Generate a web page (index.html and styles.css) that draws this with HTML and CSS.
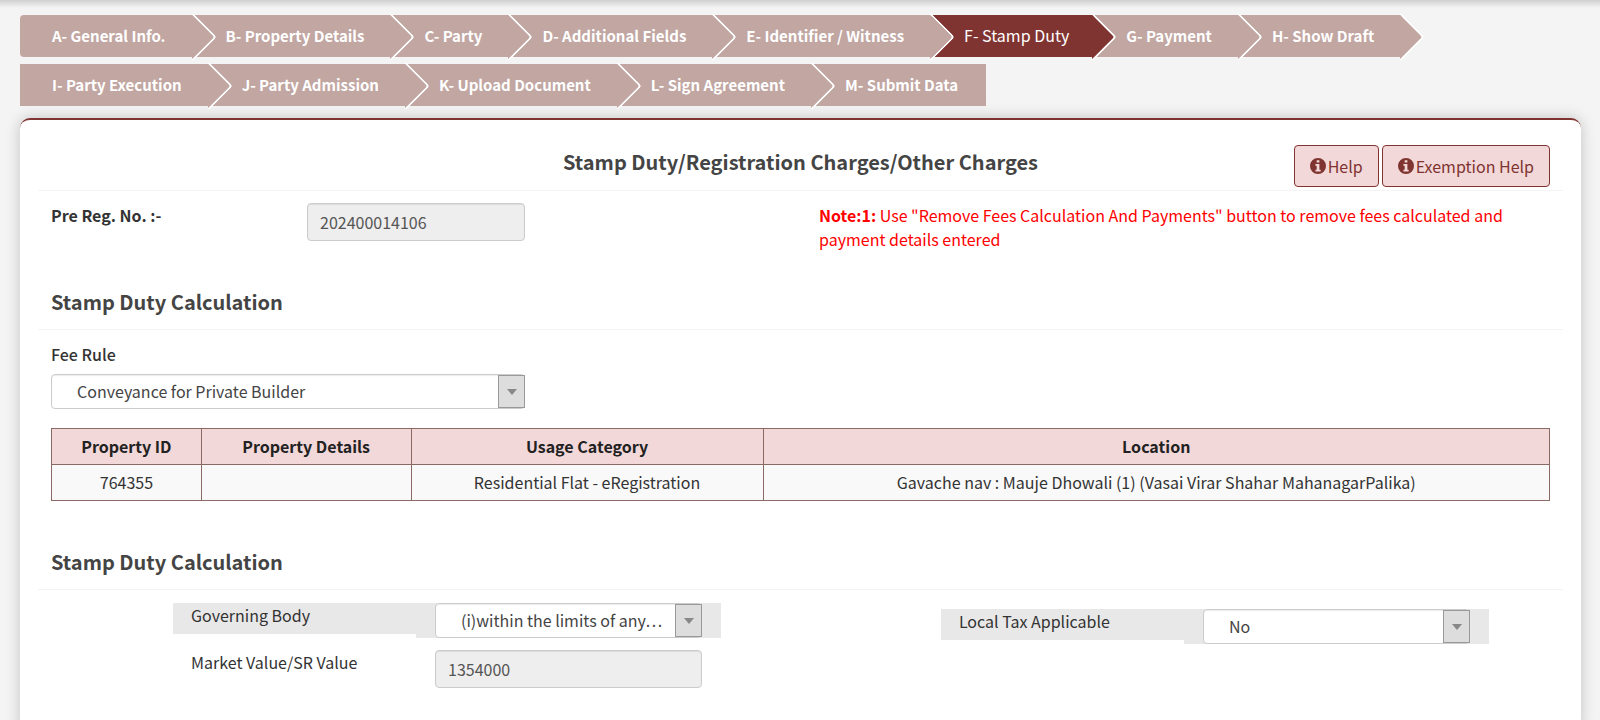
FILE: index.html
```html
<!DOCTYPE html>
<html lang="en">
<head>
    <meta charset="UTF-8">
    <meta name="viewport" content="width=device-width, initial-scale=1.0">
    <title>Stamp Duty</title>
    <link rel="stylesheet" href="styles.css">
</head>
<body>
    <div class="top-shadow"></div>
    <nav class="steps">
        <a href="#">A- General Info.</a>
        <a href="#">B- Property Details</a>
        <a href="#">C- Party</a>
        <a href="#">D- Additional Fields</a>
        <a href="#">E- Identifier / Witness</a>
        <a href="#" class="active">F- Stamp Duty</a>
        <a href="#">G- Payment</a>
        <a href="#">H- Show Draft</a>
        <a href="#">I- Party Execution</a>
        <a href="#">J- Party Admission</a>
        <a href="#">K- Upload Document</a>
        <a href="#">L- Sign Agreement</a>
        <a href="#">M- Submit Data</a>
    </nav>

    <main class="card">
        <header class="card-header">
            <h1>Stamp Duty/Registration Charges/Other Charges</h1>
            <div class="help-buttons">
                <button type="button" class="btn">
                    <svg class="icon" viewBox="0 0 16 16" aria-hidden="true"><path fill-rule="evenodd" d="M8 0a8 8 0 1 1 0 16A8 8 0 0 1 8 0zM6.7 2.2v2.4h2.7V2.2zM5.4 6v1.7h1.3v4H5.4v1.7h5.3v-1.7H9.4V6z"/></svg>
                    Help
                </button>
                <button type="button" class="btn">
                    <svg class="icon" viewBox="0 0 16 16" aria-hidden="true"><path fill-rule="evenodd" d="M8 0a8 8 0 1 1 0 16A8 8 0 0 1 8 0zM6.7 2.2v2.4h2.7V2.2zM5.4 6v1.7h1.3v4H5.4v1.7h5.3v-1.7H9.4V6z"/></svg>
                    Exemption Help
                </button>
            </div>
        </header>

        <div class="reg-row">
            <label for="regNo" class="bold">Pre Reg. No. :-</label>
            <input type="text" id="regNo" class="field" value="202400014106" readonly>
            <p class="note"><b>Note:1:</b> Use "Remove Fees Calculation And Payments" button to remove fees calculated and payment details entered</p>
        </div>

        <h2>Stamp Duty Calculation</h2>
        <div class="section">
            <label for="feeRule" class="fee-label">Fee Rule</label>
            <div class="select fee-select">
                <select id="feeRule">
                    <option>Conveyance for Private Builder</option>
                </select>
            </div>
            <table>
                <thead>
                    <tr>
                        <th class="col-id">Property ID</th>
                        <th class="col-details">Property Details</th>
                        <th class="col-usage">Usage Category</th>
                        <th>Location</th>
                    </tr>
                </thead>
                <tbody>
                    <tr>
                        <td>764355</td>
                        <td></td>
                        <td>Residential Flat - eRegistration</td>
                        <td>Gavache nav : Mauje Dhowali (1) (Vasai Virar Shahar MahanagarPalika)</td>
                    </tr>
                </tbody>
            </table>
        </div>

        <h2>Stamp Duty Calculation</h2>
        <div class="calc">
            <div class="calc-left">
                <div class="calc-row shaded">
                    <label for="body">Governing Body</label>
                    <div class="control">
                        <div class="select">
                            <select id="body">
                                <option>(i)within the limits of any…</option>
                            </select>
                        </div>
                    </div>
                </div>
                <div class="calc-row">
                    <label for="marketValue">Market Value/SR Value</label>
                    <div class="control">
                        <input type="text" id="marketValue" class="field" value="1354000" readonly>
                    </div>
                </div>
            </div>
            <div class="calc-right">
                <div class="calc-row shaded">
                    <label for="localTax">Local Tax Applicable</label>
                    <div class="control">
                        <div class="select">
                            <select id="localTax">
                                <option>No</option>
                            </select>
                        </div>
                    </div>
                </div>
            </div>
        </div>
    </main>
</body>
</html>
```
FILE: styles.css
```css
* {
    box-sizing: border-box;
}
body {
    margin: 0;
    min-height: 100vh;
    display: flex;
    flex-direction: column;
    font-family: "Noto Sans CJK KR", "Open Sans", sans-serif;
    font-size: 16px;
    line-height: 24px;
    color: #333;
    background: #f4f4f4;
}
input, select, button {
    font: inherit;
}
.top-shadow {
    height: 8px;
    background: linear-gradient(#d0d0d0, #f4f4f4);
}

/* wizard steps */
.steps {
    display: flex;
    flex-wrap: wrap;
    row-gap: 7px;
    padding: 7px 20px 12px;
}
.steps a {
    position: relative;
    height: 42px;
    padding: 0 28px 0 32px;
    line-height: 41px;
    font-size: 15px;
    font-weight: bold;
    color: #fff;
    text-decoration: none;
    background: #c1a6a2;
}
.steps a:first-child {
    border-radius: 4px 0 0 4px;
}
.steps a:not(:last-child)::after {
    content: "";
    position: absolute;
    top: 5px;
    right: -16px;
    z-index: 1;
    width: 32px;
    height: 32px;
    border-top: 2px solid #fff;
    border-right: 2px solid #fff;
    border-radius: 0 4px 0 0;
    background: linear-gradient(45deg, transparent 50%, #c1a6a2 50%);
    transform: rotate(45deg);
}
.steps a.active {
    padding-right: 25px;
    font-size: 16px;
    font-weight: normal;
    background: #7f3431;
}
.steps a.active::after {
    background: linear-gradient(45deg, transparent 50%, #7f3431 50%);
}

/* card */
.card {
    flex: 1;
    margin: 0 19px 0 20px;
    padding: 0 18px;
    background: #fff;
    border-top: 2px solid #7f3431;
    border-radius: 10px 10px 0 0;
    box-shadow: 0 0 15px rgba(0, 0, 0, 0.2);
}
.card-header {
    display: grid;
    grid-template-columns: 1fr auto 1fr;
    padding: 25px 13px 3px;
    border-bottom: 1px solid #f4f4f4;
}
h1, h2 {
    margin: 0;
    font-size: 20px;
    font-weight: bold;
    color: #444;
}
h1 {
    grid-column: 2;
    line-height: 34px;
}
h2 {
    padding: 0 13px 15px;
    border-bottom: 1px solid #f4f4f4;
}
.help-buttons {
    display: flex;
    justify-content: flex-end;
    gap: 3px;
}
.btn {
    display: flex;
    align-items: center;
    gap: 2px;
    height: 42px;
    padding: 0 15px;
    color: #7f3431;
    background: #f2d8d9;
    border: 1px solid #7f3431;
    border-radius: 4px;
    white-space: nowrap;
    cursor: pointer;
}
.icon {
    width: 16px;
    height: 16px;
    fill: #7f3431;
}
.reg-row {
    display: grid;
    grid-template-columns: 256fr 218fr 294fr 731fr;
    align-items: start;
    padding: 12px 13px 39px;
}
.bold {
    font-weight: bold;
}
.note {
    grid-column: 4;
    margin: 0;
    padding-right: 30px;
    color: #f00;
}
.field {
    display: block;
    width: 100%;
    height: 38px;
    padding: 0 12px;
    color: #555;
    background: #eee;
    border: 1px solid #ccc;
    border-radius: 4px;
    box-shadow: inset 0 1px 1px rgba(0, 0, 0, 0.08);
}
.section {
    padding: 12px 13px 49px;
}
.fee-label {
    display: block;
    margin-bottom: 8px;
    font-weight: 500;
}

/* drop-down with boxed arrow */
.select {
    position: relative;
}
.select select {
    display: block;
    width: 100%;
    height: 35px;
    padding: 0 28px 2px 25px;
    color: #444;
    background: #fff;
    border: 1px solid #ccc;
    border-radius: 4px;
    box-shadow: inset 0 1px 1px rgba(0, 0, 0, 0.08);
    appearance: none;
}
.select::before {
    content: "";
    position: absolute;
    top: 1px;
    right: 0;
    bottom: 1px;
    width: 25px;
    background: #ddd;
    border: 1px solid #999;
    pointer-events: none;
}
.select::after {
    content: "";
    position: absolute;
    top: 15px;
    right: 8px;
    border: 5px solid transparent;
    border-top: 6px solid #888;
    border-bottom: 0;
    pointer-events: none;
}
.fee-select {
    width: 32%;
    max-width: 474px;
}

table {
    width: 100%;
    margin-top: 19px;
    border-collapse: collapse;
    text-align: center;
}
th, td {
    height: 36px;
    padding: 0 8px 2px;
    border: 1px solid #8b6a66;
}
th {
    color: #222;
    background: #f2d8d9;
}
td {
    background: #f9f9f9;
}
.col-id {
    width: 10%;
}
.col-details {
    width: 14%;
}
.col-usage {
    width: 23.5%;
}

/* calculation fields */
.calc {
    display: grid;
    grid-template-columns: 548fr 548fr;
    column-gap: 16.7%;
    padding: 13px 74px 30px 135px;
}
.calc-right {
    padding-top: 6px;
}
.calc-row {
    display: grid;
    grid-template-columns: 243fr 305fr;
    align-items: start;
    margin-bottom: 12px;
}
.calc-row label {
    height: 31px;
    padding-left: 18px;
}
.control {
    padding: 0 19px;
}
.shaded label, .shaded .control {
    background: #e8e8e8;
}
```
